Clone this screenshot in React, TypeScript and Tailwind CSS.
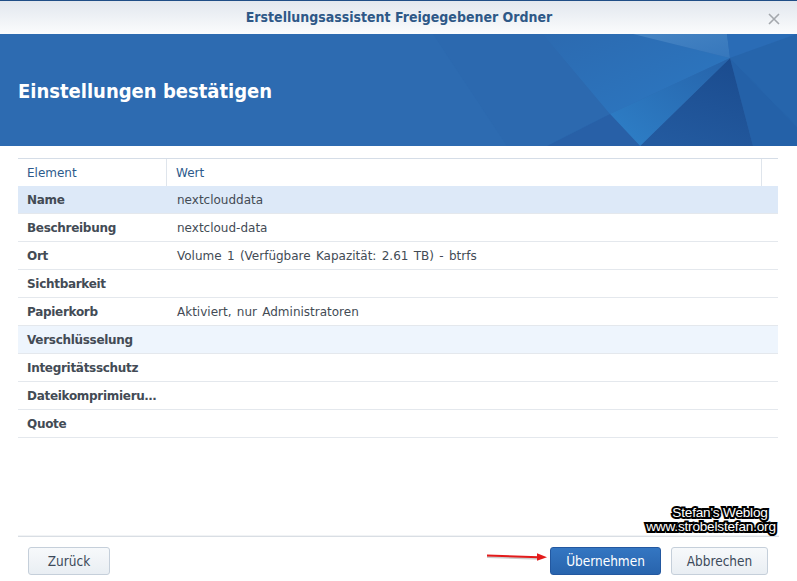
import React from "react";

const rows: { label: string; value: string; bg?: string }[] = [
  { label: "Name", value: "nextclouddata", bg: "bg-[#dde9f8]" },
  { label: "Beschreibung", value: "nextcloud-data" },
  { label: "Ort", value: "Volume 1 (Verfügbare Kapazität: 2.61 TB) - btrfs" },
  { label: "Sichtbarkeit", value: "" },
  { label: "Papierkorb", value: "Aktiviert, nur Administratoren" },
  { label: "Verschlüsselung", value: "", bg: "bg-[#eef5fd]" },
  { label: "Integritätsschutz", value: "" },
  { label: "Dateikomprimierung", value: "" },
  { label: "Quote", value: "" },
];

function BannerArt() {
  return (
    <svg
      className="absolute inset-0"
      width="797"
      height="112"
      viewBox="0 0 797 112"
      preserveAspectRatio="none"
    >
      <defs>
        <linearGradient id="gA" x1="0" y1="0" x2="1" y2="1">
          <stop offset="0" stopColor="#4684c3" />
          <stop offset="1" stopColor="#3677bc" />
        </linearGradient>
        <linearGradient id="gE" x1="0.7" y1="0" x2="0.3" y2="1">
          <stop offset="0" stopColor="#1b4c8f" />
          <stop offset="1" stopColor="#235a9f" />
        </linearGradient>
        <linearGradient id="gF" x1="0" y1="1" x2="1" y2="0">
          <stop offset="0" stopColor="#2e80c8" />
          <stop offset="1" stopColor="#2663aa" />
        </linearGradient>
        <linearGradient id="gG" x1="0" y1="0" x2="1" y2="1">
          <stop offset="0" stopColor="#2c6ab0" />
          <stop offset="1" stopColor="#2c78c2" />
        </linearGradient>
      </defs>
      <polygon points="433,0 543,0 610,80 547,112 507,112" fill="#2c69af" />
      <polygon points="543,0 633,0 730,24 610,80" fill="url(#gG)" />
      <polygon points="633,0 727,0 730,24" fill="url(#gA)" />
      <polygon points="727,0 797,0 730,24" fill="#2a6cb6" />
      <polygon points="797,0 797,93 730,24" fill="#2665ac" />
      <polygon points="730,24 797,93 797,112 753,112" fill="#2461a8" />
      <polygon points="730,24 753,112 640,112" fill="url(#gE)" />
      <polygon points="610,80 730,24 640,112" fill="url(#gF)" />
      <polygon points="610,80 640,112 547,112" fill="#2860a7" />
    </svg>
  );
}

export default function App() {
  return (
    <div className="relative w-[797px] h-[581px] bg-white flex flex-col overflow-hidden font-['DejaVu_Sans',Verdana,sans-serif]">
      {/* Title bar */}
      <div className="relative h-[34px] border-t border-[#1f4d86] bg-gradient-to-b from-[#e2e7ee] to-[#fbfcfd] flex items-center justify-center shrink-0">
        <span className="text-[14px] font-bold text-[#2e5887] font-['DejaVu_Sans_Condensed','Liberation_Sans_Narrow','Liberation_Sans',sans-serif] pl-[1px]">
          Erstellungsassistent Freigegebener Ordner
        </span>
        <svg
          className="absolute right-[17px] top-[12px]"
          width="12"
          height="12"
          viewBox="0 0 12 12"
        >
          <path d="M1 1 L11 11 M11 1 L1 11" stroke="#a4a8ad" strokeWidth="1.6" />
        </svg>
      </div>

      {/* Banner */}
      <div className="relative h-[112px] bg-[#2d6bb1] shrink-0 flex items-center px-[18px]">
        <BannerArt />
        <h1 className="relative text-white font-bold text-[20px] font-['DejaVu_Sans_Condensed','Liberation_Sans_Narrow','Liberation_Sans',sans-serif] mt-[1px]">
          Einstellungen bestätigen
        </h1>
      </div>

      {/* Content */}
      <div className="flex-1 px-[18px] pt-[12px]">
        <div className="w-[760px] border-t border-[#d5dde7] text-[12px]">
          <div className="flex h-[27px] items-center text-[#2d5a8c]">
            <div className="w-[149px] h-full flex items-center pl-[9px] border-r border-[#dfe5ec]">
              Element
            </div>
            <div className="w-[595px] h-full flex items-center pl-[9px] border-r border-[#dfe5ec]">
              Wert
            </div>
            <div className="flex-1" />
          </div>
          {rows.map((r) => (
            <div
              key={r.label}
              className={`flex h-[28px] items-center border-b border-[#e4e8ed] text-[#434b55] ${r.bg ?? ""}`}
            >
              <div className="w-[149px] pl-[9px] pr-[8px] font-bold tracking-[-0.3px] truncate">
                {r.label}
              </div>
              <div className="flex-1 pl-[10px] truncate [word-spacing:1.5px]">{r.value}</div>
            </div>
          ))}
        </div>
      </div>

      {/* Footer */}
      <div className="h-[45px] shrink-0 px-[18px]">
        <div className="w-[761px] border-t border-[#d9dee4] shadow-[0_-1px_0_#f1f3f5]" />
        <div className="flex items-center pt-[10px] pl-[10px] pr-[11px] font-['DejaVu_Sans_Condensed','Liberation_Sans_Narrow','Liberation_Sans',sans-serif] text-[13.5px]">
          <button className="w-[82px] h-[28px] rounded-[3px] border border-[#c5cfda] bg-gradient-to-b from-[#f7f9fb] to-[#e9eef3] text-[#3c4a5a]">
            Zurück
          </button>
          <div className="flex-1" />
          <button className="w-[111px] h-[28px] rounded-[3px] border border-[#2358a0] bg-gradient-to-b from-[#3476c2] to-[#2864ad] text-white">
            Übernehmen
          </button>
          <button className="ml-[10px] w-[97px] h-[28px] rounded-[3px] border border-[#c5cfda] bg-gradient-to-b from-[#f7f9fb] to-[#e9eef3] text-[#3c4a5a]">
            Abbrechen
          </button>
        </div>
      </div>

      {/* Red arrow annotation */}
      <svg
        className="absolute left-[485px] top-[551px]"
        width="66"
        height="12"
        viewBox="0 0 66 12"
      >
        <path d="M2 4.5 L54 6.2" stroke="#00000033" strokeWidth="2.2" transform="translate(0,1.5)" />
        <path d="M2 4.5 L54 6.2" stroke="#e31b1b" strokeWidth="2" />
        <polygon points="52,2.2 62,6.3 52,9.8" fill="#e31b1b" />
      </svg>

      {/* Watermark */}
      <div className="absolute left-[642px] top-[506px] w-[138px] flex flex-col items-center font-['Liberation_Sans_Narrow','Liberation_Sans',Arial,sans-serif] text-white text-[13.6px] tracking-[-0.2px] [-webkit-text-stroke:4px_#000] [paint-order:stroke_fill]">
        <span className="block leading-[14px] h-[14px] ml-[18px]">Stefan's Weblog</span>
        <span className="block leading-[14px] h-[14px]">www.strobelstefan.org</span>
      </div>
    </div>
  );
}
